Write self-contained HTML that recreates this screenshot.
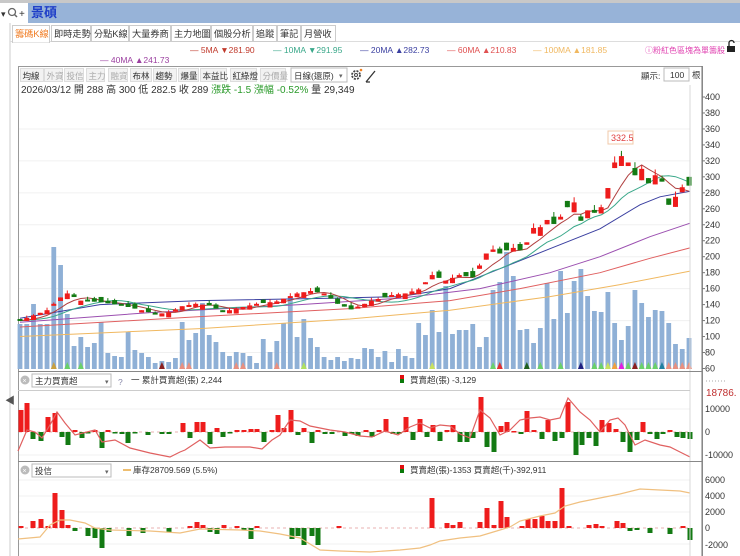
<!DOCTYPE html>
<html><head><meta charset="utf-8"><style>
html,body{margin:0;padding:0;background:#fff;width:740px;height:556px;overflow:hidden}
svg{display:block;font-family:"Liberation Sans","Noto Sans CJK TC",sans-serif}
</style></head><body>
<svg id="s" width="740" height="556" viewBox="0 0 740 556" xmlns="http://www.w3.org/2000/svg">
<rect x="0" y="0" width="740" height="556" fill="#fff"/>
<rect x="0" y="0" width="740" height="3" fill="#c8c8c8"/>
<rect x="28" y="3" width="712" height="20" fill="#97b3d8"/>
<rect x="0" y="3" width="28" height="20" fill="#fff"/>
<text x="1" y="17" font-size="9" fill="#333">▾</text>
<circle cx="12" cy="12" r="3.5" fill="none" stroke="#666" stroke-width="1.3"/><line x1="14.5" y1="14.5" x2="17" y2="17" stroke="#666" stroke-width="1.5"/>
<text x="19" y="17" font-size="10" fill="#333">+</text>
<text x="31" y="17" font-size="13" font-weight="bold" fill="#1f3fc8">景碩</text>
<line x1="10" y1="23" x2="10" y2="556" stroke="#ccc"/>
<line x1="10" y1="41.5" x2="740" y2="41.5" stroke="#ddd"/>
<g font-size="9.2" fill="#333" id="tabs"></g>
<g font-size="8.5">
<text x="190" y="53" fill="#c0392b">—    5MA ▼281.90</text>
<text x="273" y="53" fill="#3aa88a">—    10MA ▼291.95</text>
<text x="360" y="53" fill="#3a3fa0">—    20MA ▲282.73</text>
<text x="447" y="53" fill="#e05050">—    60MA ▲210.83</text>
<text x="533" y="53" fill="#f0b860">—    100MA ▲181.85</text>
<text x="100" y="63" fill="#9b3fa0">—    40MA ▲241.73</text>
<text x="645" y="53" fill="#e040b0" font-size="8">ⓘ粉紅色區塊為單籌股</text>
</g>
<rect x="727" y="46" width="8" height="6" fill="#222"/><path d="M729 46 v-3 a2.5 2.5 0 0 1 5 0" fill="none" stroke="#222" stroke-width="1.3"/>
<rect x="18.5" y="66.5" width="684" height="490" fill="none" stroke="#999"/>
<g id="tb" font-size="8.5"></g>
<rect x="291" y="68" width="56" height="14" fill="#fff" stroke="#bbb"/>
<text x="294" y="79" font-size="8.5" fill="#333">日線(還原)</text><text x="339" y="78" font-size="7" fill="#666">▾</text>
<circle cx="356" cy="75" r="4" fill="none" stroke="#444" stroke-width="1.8" stroke-dasharray="2 1.2"/><circle cx="356" cy="75" r="1.5" fill="none" stroke="#444"/>
<circle cx="361" cy="70" r="1.3" fill="#f08020"/>
<path d="M366 82 L375 71 M366 82 l4 0" stroke="#333" stroke-width="1.3" fill="none"/>
<text x="641" y="79" font-size="8.5" fill="#333">顯示:</text>
<rect x="664" y="68" width="25" height="13" fill="#fff" stroke="#bbb"/>
<text x="670" y="78" font-size="8.5" fill="#333">100</text>
<text x="692" y="78" font-size="8.5" fill="#333">根</text>
<text x="21" y="93" font-size="10" fill="#333">2026/03/12 開 288 高 300 低 282.5 收 289 <tspan fill="#2a9a2a">漲跌 -1.5 漲幅 -0.52%</tspan> 量 29,349</text>
<g id="grid"></g><g id="vol"></g><g id="ma"></g><g id="cdl"></g><g id="p2"></g><g id="p3"></g><g id="ax" font-size="9" fill="#333"></g>
<line x1="690" y1="85" x2="690" y2="556" stroke="#d8d8d8"/>
<line x1="702" y1="66" x2="702" y2="556" stroke="#777"/>
<line x1="18" y1="371.5" x2="702" y2="371.5" stroke="#888"/>
<line x1="18" y1="461.5" x2="702" y2="461.5" stroke="#888"/>
<line x1="18" y1="390.5" x2="690" y2="390.5" stroke="#ccc"/>
<line x1="706" y1="381" x2="725" y2="381" stroke="#aaa" stroke-dasharray="1 2"/>
<text x="5" y="404" font-size="10" fill="#555">◀</text>
<g font-size="8.5" fill="#333">
<circle cx="25" cy="380" r="4.5" fill="#bbb"/><text x="22.5" y="383" font-size="7" fill="#fff">×</text>
<rect x="32" y="374" width="79" height="13" fill="#fff" stroke="#bbb"/><text x="35" y="384">主力買賣超</text><text x="105" y="384" font-size="7" fill="#666">▾</text>
<text x="118" y="385" fill="#88a">?</text>
<text x="131" y="383">一 累計買賣超(張) 2,244</text>
<rect x="400" y="375" width="4" height="4" fill="#e01010"/><rect x="400" y="379" width="4" height="4" fill="#0a7a0a"/>
<text x="410" y="383">買賣超(張) -3,129</text>
<circle cx="25" cy="470" r="4.5" fill="#bbb"/><text x="22.5" y="473" font-size="7" fill="#fff">×</text>
<rect x="32" y="464" width="79" height="13" fill="#fff" stroke="#bbb"/><text x="35" y="474">投信</text><text x="105" y="474" font-size="7" fill="#666">▾</text>
<line x1="123" y1="470" x2="131" y2="470" stroke="#e8a840" stroke-width="1.5"/><text x="133" y="473">庫存28709.569 (5.5%)</text>
<rect x="400" y="465" width="4" height="4" fill="#e01010"/><rect x="400" y="469" width="4" height="4" fill="#0a7a0a"/>
<text x="410" y="473">買賣超(張)-1353 買賣超(千)-392,911</text>
</g>
<rect x="608" y="131" width="25" height="13" fill="#fff" stroke="#f0c8a8"/>
<text x="611" y="141" font-size="9" fill="#e04040">332.5</text>
</svg>
<script>
var NS="http://www.w3.org/2000/svg";
function el(p,t,a,txt){var e=document.createElementNS(NS,t);for(var k in a)e.setAttribute(k,a[k]);if(txt!=null)e.textContent=txt;document.getElementById(p).appendChild(e);return e;}
var tabs=[["籌碼K線",12,50],["即時走勢",51,91],["分點K線",91,129],["大量券商",129,171],["主力地圖",171,211],["個股分析",211,253],["追蹤",253,277],["筆記",277,301],["月營收",301,336]];
tabs.forEach(function(t,i){el("tabs","rect",{x:t[1]+.5,y:25.5,width:t[2]-t[1]-1,height:i==0?17:16,fill:"#fff",stroke:"#ccc"});el("tabs","text",{x:t[1]+3,y:37,fill:i==0?"#f07a20":"#333"},t[0]);});
el("tabs","line",{x1:13,y1:41.5,x2:49,y2:41.5,stroke:"#fff",'stroke-width':2});
var tb=[["均線",20,44,0],["外資",44,63,1],["投信",64,84,1],["主力",86,105,1],["融資",108,128,1],["布林",130,152,0],["趨勢",153,177,0],["爆量",178,199,0],["本益比",200,227,0],["紅綠燈",230,257,0],["分價量",260,286,1]];
tb.forEach(function(t){el("tb","rect",{x:t[1]+.5,y:68.5,width:t[2]-t[1]-1,height:13,fill:"#f2f2f2",stroke:"#ddd"});el("tb","text",{x:t[1]+2.5,y:79,fill:t[3]?"#aaa":"#333"},t[0]);});
function Y(p){return 97+(400-p)*0.7985;}
for(var p=400;p>=60;p-=20){el("ax","text",{x:705,y:Y(p)+3},p);el("ax","line",{x1:702,y1:Y(p),x2:705,y2:Y(p),stroke:"#777"});}
for(var p=360;p>=80;p-=40)el("grid","line",{x1:19,y1:Y(p),x2:690,y2:Y(p),stroke:"#f0f0f0"});
[[10000,412],[0,435],[-10000,458]].forEach(function(a){el("ax","text",{x:705,y:a[1]},a[0]);});
el("ax","text",{x:706,y:396,fill:"#c03030","font-size":"10"},"18786.");
[[6000,483],[4000,499],[2000,515],[0,531],[-2000,548]].forEach(function(a){el("ax","text",{x:705,y:a[1]},a[0]);});
[512,496,480,544].forEach(function(y){el("grid","line",{x1:19,y1:y,x2:690,y2:y,stroke:"#f2f2f2"});});
[409,455].forEach(function(y){el("grid","line",{x1:19,y1:y,x2:690,y2:y,stroke:"#f2f2f2"});});
el("grid","line",{x1:19,y1:432,x2:690,y2:432,stroke:"#e8b0b0","stroke-dasharray":"3 3"});
el("grid","line",{x1:19,y1:528,x2:690,y2:528,stroke:"#e8b0b0","stroke-dasharray":"3 3"});
var vh=[45,45,65,45,45,122,104,55,23,32,22,26,47,16,13,12,37,19,16,12,6,8,7,11,47,29,36,66,34,27,17,13,17,16,13,6,30,17,28,46,72,32,50,31,22,12,9,12,8,11,10,21,20,12,
18,7,20,13,11,46,34,59,37,83,35,39,39,45,22,32,79,87,117,93,39,40,26,41,86,50,98,56,88,100,73,58,57,77,46,29,43,79,66,52,59,58,46,25,20,31,33,37];
var N=100,dx=669/99;function X(i){return 20+i*dx;}
for(var i=0;i<N;i++){var h=vh[i]||20;el("vol","rect",{x:X(i)-2.4,y:369-h,width:4.8,height:h,fill:"#8fb0d6"});}
var tri=[[5,"#c8a040"],[7,"#6ad06a"],[9,"#6ad06a"],[21,"#8a2020"],[24,"#e89080"],[25,"#e89080"],[32,"#e89080"],[33,"#e89080"],[38,"#e89080"],[42,"#b0e060"],[61,"#c8e060"],[70,"#6ad06a"],[71,"#e03030"],[75,"#206020"],[77,"#6ad06a"],[80,"#6ad06a"],[83,"#202080"],[85,"#6ad06a"],[86,"#6ad06a"],[87,"#c8e060"],[88,"#f0a040"],[89,"#e020e0"],[90,"#6ad06a"],[91,"#8a2020"],[92,"#6ad06a"],[93,"#6ad06a"],[94,"#6ad06a"],[95,"#2080a0"],[96,"#e89080"],[97,"#e89080"],[98,"#e89080"],[99,"#e89080"]];
tri.forEach(function(t){var x=X(t[0]);el("vol","path",{d:"M"+(x-3)+" 369 L"+x+" 362 L"+(x+3)+" 369Z",fill:t[1]});});
var K=[[0,120],[4,133],[6,149],[7,154],[9,145],[12,143],[15,139],[18,133],[20,128],[22,130],[24,138],[26,141],[28,139],[30,131],[32,135],[35,141],[38,144],[41,154],[43,157],[45,154],[47,141],[49,134],[51,141],[52,145],[54,149],[55,152],[57,154],[59,159],[61,177],[63,170],[65,177],[67,174],[68,189],[69,204],[70,209],[71,204],[72,208],[73,211],[74,208],[75,218],[76,236],[77,237],[78,246],[79,241],[80,250],[81,262],[82,268],[83,245],[84,258],[85,255],[86,262],[87,286],[88,318],[89,326],[90,318],[91,302],[92,310],[93,292],[94,302],[95,294],[96,265],[97,275],[98,287],[99,289]];
var C=[];for(var k=0;k<K.length-1;k++){var a=K[k],b=K[k+1];for(var i=a[0];i<b[0];i++)C[i]=a[1]+(b[1]-a[1])*(i-a[0])/(b[0]-a[0]);}C[99]=289;
for(var i=0;i<N;i++){if(i>0&&C[i]==C[i-1])C[i]+=((i*7)%5-2)*0.8;}
function poly(pts,col,w){el("ma","polyline",{points:pts.map(function(q){return q[0].toFixed(1)+","+Y(q[1]).toFixed(1);}).join(" "),fill:"none",stroke:col,"stroke-width":w||1});}
function ma(n,col){var pts=[];for(var i=0;i<N;i++){var s=0;for(var j=0;j<n;j++){s+=C[Math.max(0,i-j)];}pts.push([X(i),s/n]);}poly(pts,col);}
poly([[20,100],[200,110],[350,122],[450,133],[550,150],[620,165],[690,182]],"#f0b860");
poly([[20,112],[200,125],[350,135],[450,145],[520,160],[600,180],[650,198],[690,211]],"#e06060");
poly([[20,118],[150,130],[300,140],[400,148],[480,160],[550,180],[600,200],[650,225],[690,242]],"#9b4fb0");
poly([[20,123],[100,140],[200,145],[330,148],[400,150],[450,160],[500,185],[550,210],[600,235],[640,265],[660,275],[690,282]],"#3a3fa0");
ma(10,"#3aa88a");ma(5,"#b04040");
for(var i=0;i<N;i++){var c=C[i],pc=i?C[i-1]:c-2;var up=c>=pc;if((i*13)%9==0)up=!up;
var body=Math.max(2,c*0.028*(0.5+((i*7)%5)/3.5));var o=up?c-body:c+body;
var hi=Math.max(o,c)+c*0.012*((i*5)%3),lo=Math.min(o,c)-c*0.012*((i*3)%3);
var col=up?"#ee1c1c":"#137a13",x=X(i);
el("cdl","line",{x1:x,y1:Y(hi),x2:x,y2:Y(lo),stroke:col});
var yt=Y(Math.max(o,c)),yb=Y(Math.min(o,c));el("cdl","rect",{x:x-2.5,y:yt,width:5,height:Math.max(2,yb-yt),fill:col});}
el("cdl","line",{x1:X(89),y1:Y(332.5),x2:X(89),y2:Y(326),stroke:"#137a13"});
var P2=[[21,410],[27,403],[33,439],[41,441],[48,417],[55,413],[62,437],[68,445],[75,430],[82,438],[88,433],[95,430],[102,448],[108,430],[115,433],[122,434],[128,443],[135,433],[148,435],[162,434],[169,434],[183,423],[190,438],[197,422],[203,422],[210,444],[217,428],[223,437],[230,433],[237,430],[244,430],[251,429],[257,429],[264,442],[272,430],[278,415],[284,428],[291,410],[298,435],[304,428],[312,443],[318,430],[325,434],[332,434],[345,436],[352,434],[358,436],[366,430],
[372,437],[379,430],[386,419],[393,434],[399,434],[406,417],[413,440],[420,419],[427,437],[433,425],[440,441],[447,430],[453,425],[460,442],[467,442],[473,438],[481,397],[487,447],[494,452],[501,426],[507,422],[514,431],[521,434],[527,411],[534,430],[542,439],[548,420],[555,441],[562,438],[568,402],[576,455],[582,445],[589,438],[596,446],[602,420],[609,423],[616,429],[623,442],[630,452],[637,440],[643,422],[650,434],[657,439],[663,434],[670,430],[677,437],[683,438],[690,439]];
P2.forEach(function(b){var t=Math.min(b[1],432),h=Math.max(1.5,Math.abs(b[1]-432));el("p2","rect",{x:b[0]-2.5,y:t,width:5,height:h,fill:b[1]<432?"#ee1c1c":"#137a13"});});
var L2=[[18,451],[27,430],[35,432],[42,438],[50,425],[57,412],[65,423],[75,435],[95,430],[102,442],[115,440],[130,448],[150,453],[170,457],[180,452],[185,450],[200,440],[210,448],[225,447],[250,447],[262,449],[272,440],[280,435],[290,420],[300,421],[310,426],[330,430],[345,432],[360,436],[372,437],[385,431],[398,435],[410,427],[420,423],[430,428],[440,425],[450,426],[460,434],[470,438],[480,410],[490,418],[500,435],[510,430],[520,420],[530,418],[540,417],[550,420],[560,418],[568,398],[580,412],[590,420],[600,432],[610,420],[618,418],[625,425],[635,445],[645,440],[660,445],[670,447],[680,452],[690,457]];
el("p2","polyline",{points:L2.join(" "),fill:"none",stroke:"#e06060","stroke-width":1.2});
var P3=[[21,526],[33,521],[41,519],[48,526],[55,493],[62,510],[68,525],[75,531],[88,536],[95,538],[102,548],[109,532],[129,536],[143,533],[169,532],[190,526],[197,522],[203,525],[210,532],[217,534],[224,525],[237,526],[244,530],[251,539],[257,526],[292,539],[298,536],[304,545],[312,536],[318,545],[339,526],
[432,498],[447,523],[453,525],[460,522],[480,522],[487,508],[494,525],[501,501],[507,517],[522,526],[528,519],[535,519],[542,516],[548,521],[555,521],[562,488],[569,526],[589,525],[596,524],[602,526],[617,521],[623,523],[630,531],[637,530],[650,533],[670,534],[683,526],[690,540]];
P3.forEach(function(b){var t=Math.min(b[1],528),h=Math.max(1.5,Math.abs(b[1]-528));el("p3","rect",{x:b[0]-2.5,y:t,width:5,height:h,fill:b[1]<528?"#ee1c1c":"#137a13"});});
var L3=[[18,539],[40,537],[50,525],[60,520],[70,520],[85,523],[95,528],[110,530],[150,531],[180,533],[200,529],[240,530],[260,531],[280,534],[300,538],[320,550],[340,551],[370,552],[400,550],[420,548],[430,545],[440,541],[460,538],[480,536],[500,530],[510,527],[520,521],[540,516],[555,513],[565,506],[580,502],[595,499],[620,494],[640,489],[660,490],[680,491],[690,493]];
el("p3","polyline",{points:L3.join(" "),fill:"none",stroke:"#f0c080","stroke-width":1.2});
</script>
</body></html>
